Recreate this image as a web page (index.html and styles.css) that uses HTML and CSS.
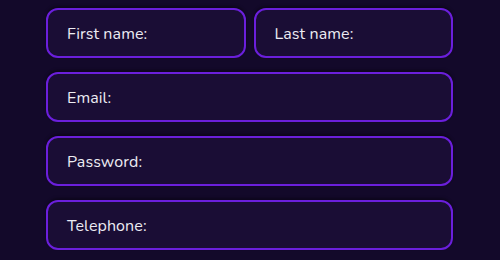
FILE: index.html
```html
<!DOCTYPE html>
<html lang="en">
<head>
<meta charset="utf-8">
<link rel="stylesheet" href="styles.css">
</head>
<body>
<form class="form">
  <div class="row">
    <label class="field"><span class="label">First name:</span></label>
    <label class="field"><span class="label">Last name:</span></label>
  </div>
  <label class="field"><span class="label">Email:</span></label>
  <label class="field"><span class="label">Password:</span></label>
  <label class="field"><span class="label">Telephone:</span></label>
</form>
</body>
</html>
```
FILE: styles.css
```css
html, body {
  margin: 0;
  padding: 0;
  background: #13092a;
  height: 100%;
}
body {
  font-family: "Nunito", "Lato", "Noto Sans", sans-serif;
}
.form {
  width: 407px;
  margin-left: 46px;
  padding-top: 8px;
  display: flex;
  flex-direction: column;
  gap: 14px;
}
.row {
  display: flex;
  gap: 8px;
}
.row .field {
  flex: 1;
}
.field {
  box-sizing: border-box;
  height: 50px;
  border: 2px solid #6b1fdc;
  border-radius: 12px;
  background: #1a0d35;
  display: flex;
  align-items: center;
  padding-left: 19px;
  box-shadow: 0 -2px 3px rgba(0,0,0,0.35);
}
.label {
  color: #ecebf2;
  font-size: 16px;
  line-height: 1;
  padding-top: 1px;
  letter-spacing: 0.1px;
}
```
